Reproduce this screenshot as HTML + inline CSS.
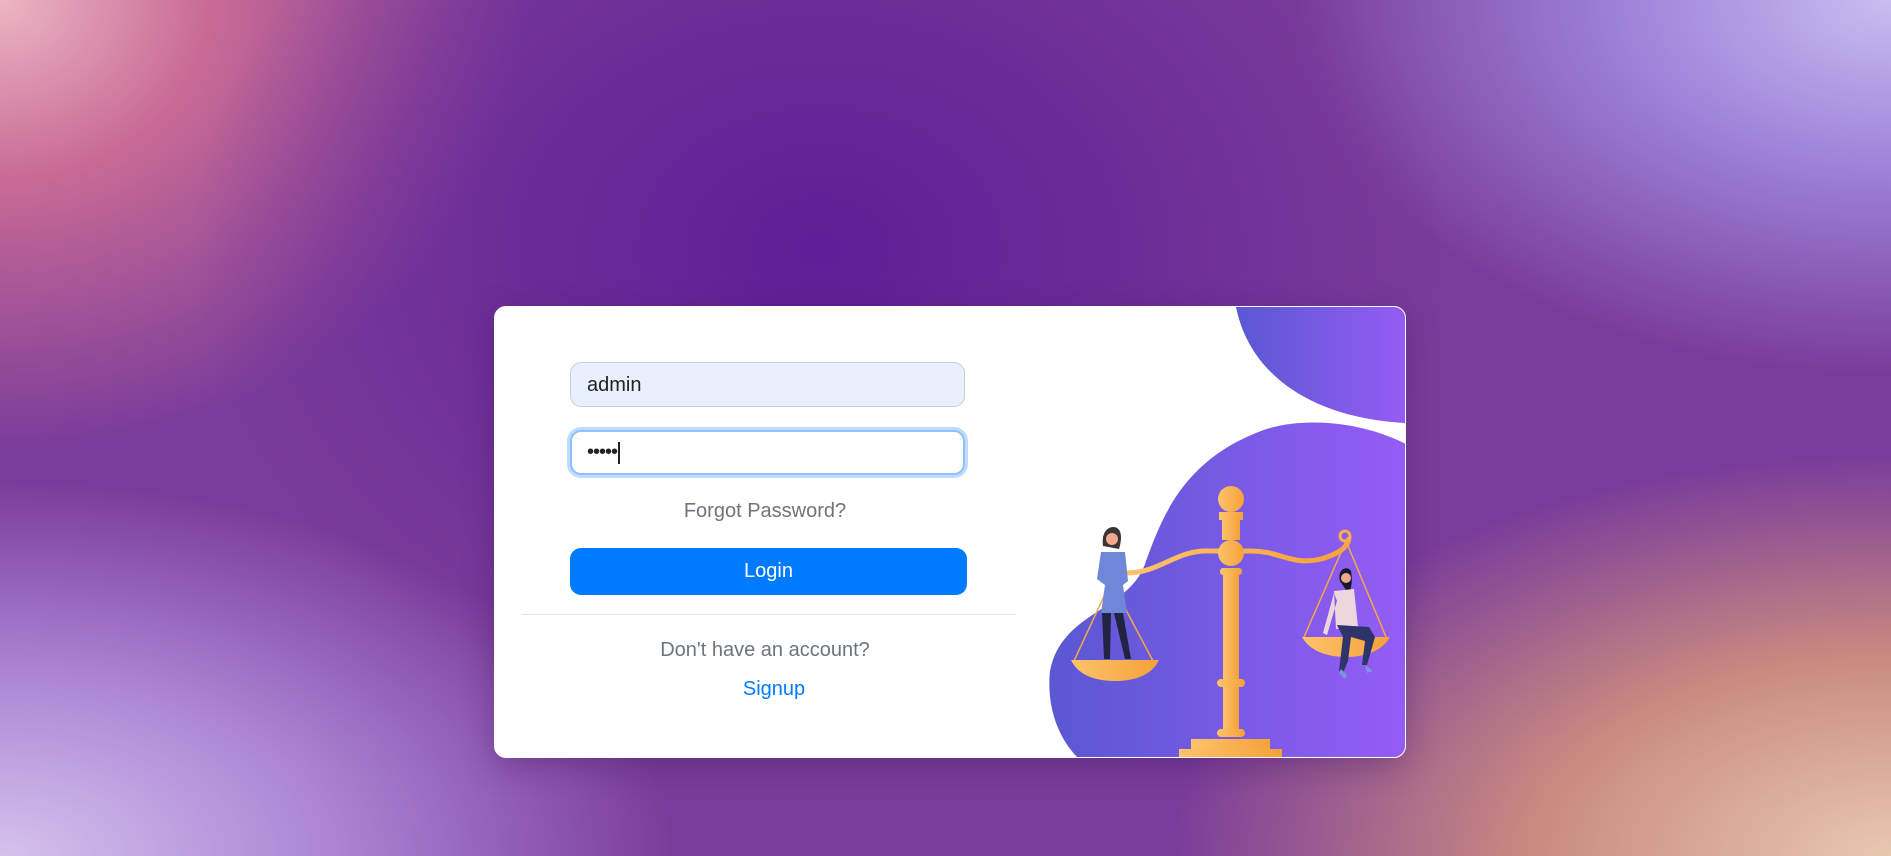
<!DOCTYPE html>
<html><head><meta charset="utf-8"><style>
html,body{margin:0;padding:0;width:1891px;height:856px;overflow:hidden;font-family:"Liberation Sans",Arial,sans-serif}
body{position:relative;background:
radial-gradient(ellipse 900px 700px at 820px 250px,#5e1e96 0%,rgba(100,35,150,0.6) 35%,rgba(100,35,150,0) 70%),
radial-gradient(ellipse 700px 600px at 0px 0px,#ecb6c4 0%,#c86a95 30%,rgba(160,60,130,0) 75%),
radial-gradient(ellipse 800px 500px at 1891px 0px,#c9bdf0 0%,#9c80d8 35%,rgba(120,90,200,0) 75%),
radial-gradient(ellipse 900px 500px at 0px 856px,#d4c2ec 0%,#ae88d6 35%,rgba(140,90,200,0) 75%),
radial-gradient(ellipse 900px 500px at 1891px 856px,#e8c8b0 0%,#c98a80 40%,rgba(160,90,130,0) 80%),
#7a3c9a}
.card{position:absolute;left:494px;top:306px;width:910px;height:450px;background:#fff;border-radius:12px;border:1px solid rgba(255,255,255,.7);overflow:hidden;box-shadow:0 8px 30px rgba(60,20,90,.35)}
.inp{position:absolute;left:75px;width:395px;height:45px;border-radius:11px;box-sizing:border-box;font-size:20px;color:#222;padding-left:16px;line-height:45px}
.i1{top:55px;background:#e8f0fe;border:1px solid #c6cfdc}
.i2{top:123px;background:#fff;border:2px solid #8fc1ff;box-shadow:0 0 0 3px #bfdcff;line-height:41px;padding-left:15px;letter-spacing:-1px}
.t{position:absolute;left:20px;width:500px;text-align:center;font-size:20px;color:#6c757d}
.btn{position:absolute;left:75px;top:241px;width:397px;height:47px;border-radius:11px;background:#007bff;color:#fff;font-size:20px;text-align:center;line-height:47px}
.hr{position:absolute;left:27px;top:307px;width:494px;height:1px;background:#dee2e6}
</style></head><body>
<div class="card">
<div class="inp i1">admin</div>
<div class="inp i2">•••••<span style="display:inline-block;width:2px;height:22px;background:#222;vertical-align:middle;margin-left:1px"></span></div>
<div class="t" style="top:193px">Forgot Password?</div>
<div class="btn">Login</div>
<div class="hr"></div>
<div class="t" style="top:332px">Don't have an account?</div>
<div class="t" style="top:371px;color:#007bff;left:29px">Signup</div>
<svg style="position:absolute;left:0;top:0" width="910" height="450" viewBox="494 306 910 450">
<defs>
<linearGradient id="bg" x1="0" x2="1"><stop offset="0" stop-color="#5a58d2"/><stop offset="1" stop-color="#955cf5"/></linearGradient>
<linearGradient id="gd" x1="0" x2="1"><stop offset="0" stop-color="#fdc36b"/><stop offset="1" stop-color="#f5a13a"/></linearGradient>
</defs>
<path d="M1235 306 C1250 380 1320 418 1405 422 L1405 306 Z" fill="url(#bg)"/>
<path d="M1405 443 C1360 420 1300 415 1260 430 C1180 460 1160 520 1145 560 C1130 610 1060 610 1049 670 C1045 710 1060 740 1077 757 L1405 757 Z" fill="url(#bg)"/>
<!-- beam -->
<path d="M1125 572 C1160 572 1175 548 1210 550 L1250 550 C1280 550 1290 565 1320 558 C1340 552 1348 545 1348 536" fill="none" stroke="url(#gd)" stroke-width="5"/>
<circle cx="1344" cy="535" r="5" fill="none" stroke="#f7b04e" stroke-width="3"/>
<!-- strings -->
<path d="M1110 580 L1073 660 M1115 590 L1152 660 M1345 540 L1303 636 M1345 540 L1385 636" stroke="#f5a84a" stroke-width="1.5" fill="none"/>
<!-- pole -->
<circle cx="1230" cy="498" r="13" fill="url(#gd)"/>
<rect x="1218" y="511" width="24" height="8" fill="url(#gd)"/>
<rect x="1221" y="517" width="18" height="22" fill="url(#gd)"/>
<circle cx="1230" cy="552" r="13" fill="url(#gd)"/>
<rect x="1219" y="567" width="22" height="7" rx="3" fill="url(#gd)"/>
<rect x="1222" y="572" width="16" height="160" fill="url(#gd)"/>
<rect x="1216" y="678" width="28" height="8" rx="4" fill="url(#gd)"/>
<rect x="1216" y="728" width="28" height="8" rx="4" fill="url(#gd)"/>
<rect x="1190" y="738" width="79" height="10" fill="url(#gd)"/>
<rect x="1178" y="748" width="103" height="10" fill="url(#gd)"/>
<!-- pans -->
<path d="M1070 659 L1158 659 C1150 676 1130 680 1114 680 C1098 680 1078 676 1070 659 Z" fill="url(#gd)"/>
<path d="M1301 636 L1389 636 C1380 652 1360 656 1345 656 C1330 656 1310 652 1301 636 Z" fill="url(#gd)"/>
<!-- woman left -->
<path d="M1102 545 C1100 530 1108 526 1112 526 C1120 526 1122 535 1118 548 Z" fill="#3c3535"/>
<circle cx="1111" cy="538" r="6" fill="#f0a98d"/>
<path d="M1100 551 L1124 551 L1127 580 L1122 584 L1126 612 L1100 612 L1104 584 L1096 578 Z" fill="#6f86d9"/>
<path d="M1101 612 L1110 612 L1109 658 L1103 658 Z M1113 612 L1122 612 L1130 658 L1124 658 Z" fill="#1f2540"/>
<!-- woman right -->
<path d="M1339 580 C1336 568 1346 564 1350 570 C1352 580 1350 590 1347 592 Z" fill="#141a2a"/>
<circle cx="1345" cy="577" r="5" fill="#f0a98d"/>
<path d="M1333 590 L1353 588 L1357 626 L1335 628 Z M1333 592 L1322 632 L1326 634 L1336 600 Z" fill="#ecd8dc"/>
<path d="M1336 624 L1368 626 L1374 636 L1366 664 L1361 664 L1364 640 L1350 636 L1347 660 L1342 672 L1338 670 L1342 636 Z" fill="#2c346a"/>
<path d="M1340 668 L1346 674 L1344 678 L1338 672 Z M1364 664 L1372 670 L1366 672 Z" fill="#7f94e0"/>
</svg>
</div>
</body></html>
